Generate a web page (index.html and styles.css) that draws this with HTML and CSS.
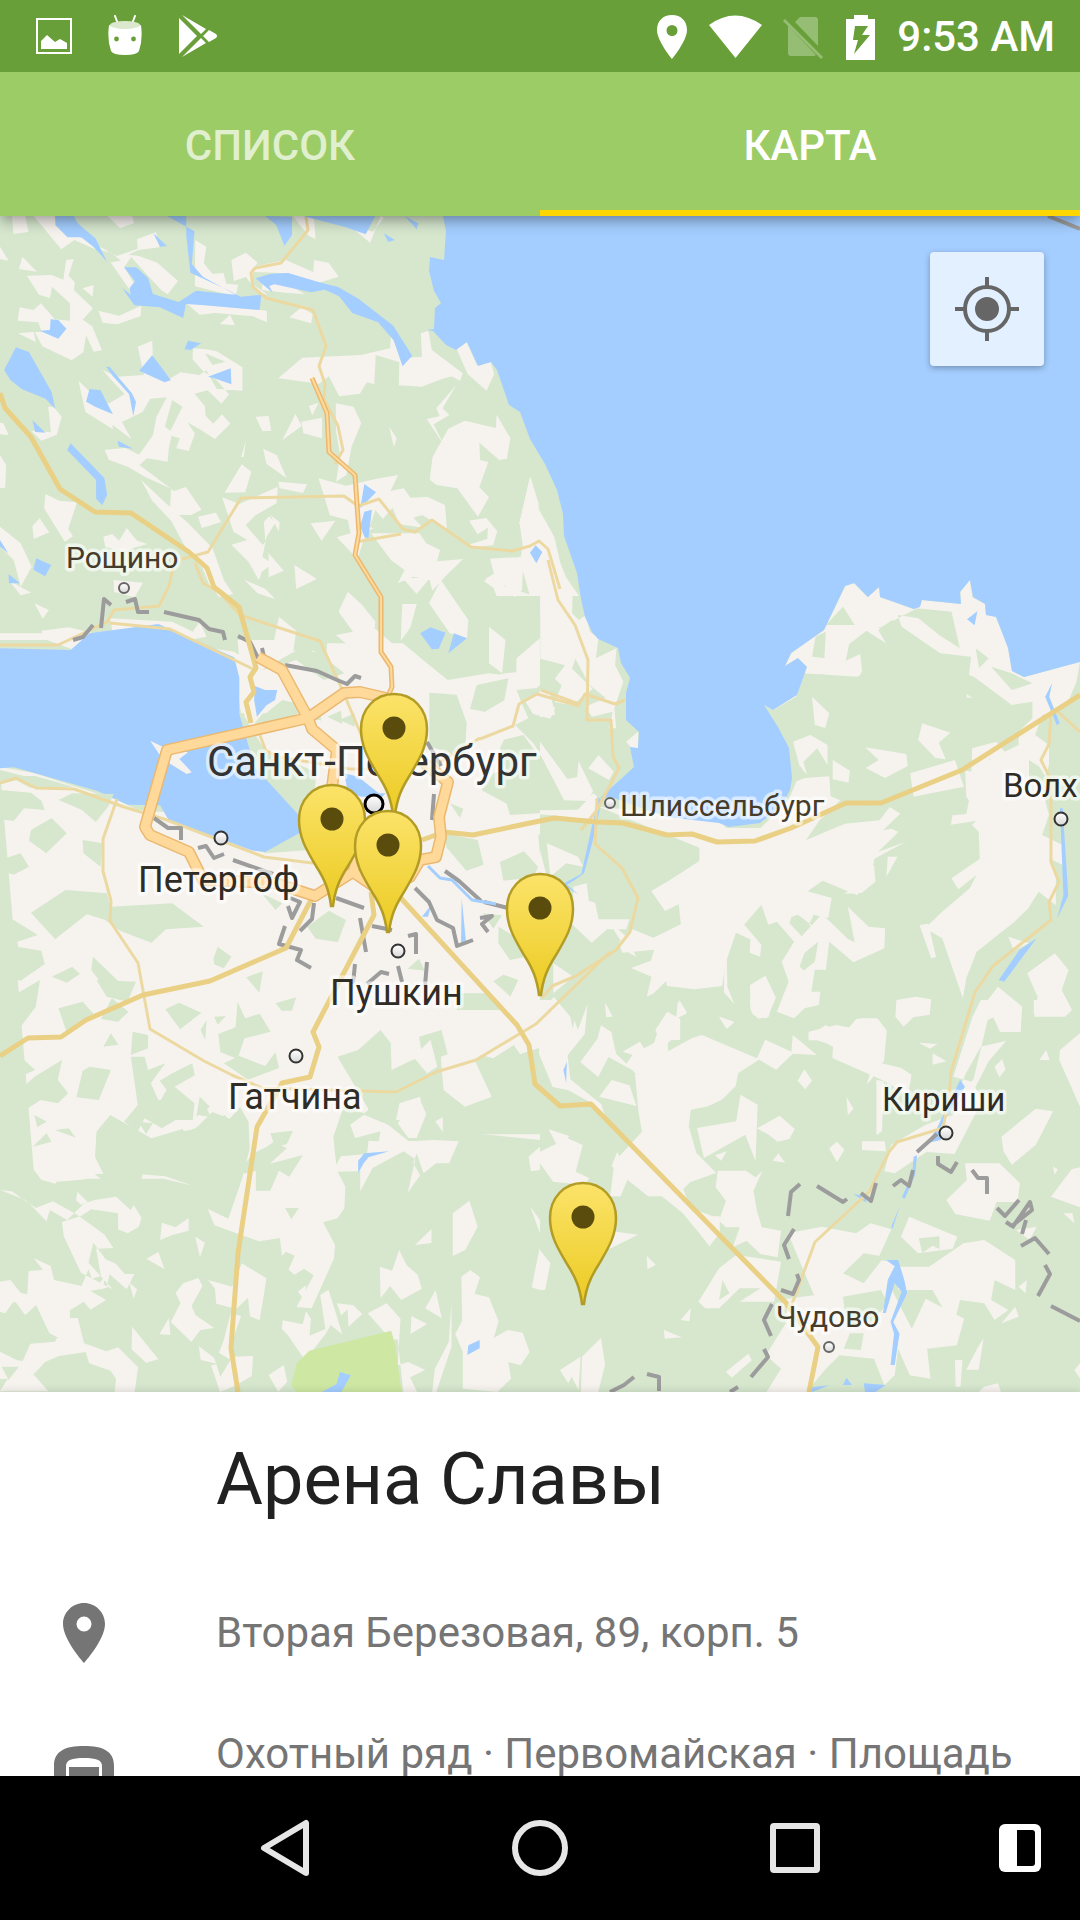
FILE: index.html
```html
<!DOCTYPE html>
<html lang="ru">
<head>
<meta charset="utf-8">
<meta name="viewport" content="width=device-width, initial-scale=1">
<title>Карта</title>
<link rel="stylesheet" href="styles.css">
</head>
<body>
<div class="screen">
  <header class="status">
    <div class="status-group status-group-left">
      <svg width="36" height="42" viewBox="0 0 36 42" aria-hidden="true"><rect x="1" y="4" width="34" height="34" fill="none" stroke="#fff" stroke-width="2"/><path fill="#fff" d="M5 26l6-6 8 7 5-3 7 4v6H5z"/></svg>
      <svg width="34" height="42" viewBox="0 0 34 42" aria-hidden="true"><path stroke="#fff" stroke-width="2" stroke-linecap="round" d="M7 1l3 8M27 1l-3 8"/><path fill="#fff" d="M1 10q16 5 32 0 2 15-2 26-2 4-14 4T3 36Q-1 25 1 10z"/><ellipse cx="17" cy="10" rx="15" ry="4" fill="#dbe8cd"/><circle cx="8.500" cy="24" r="2.400" fill="#689f38"/><circle cx="25.500" cy="24" r="2.400" fill="#689f38"/></svg>
      <svg width="40" height="44" viewBox="0 0 40 44" aria-hidden="true"><path fill="#fff" d="M1 4l18 18L1 40zM4 1l24 14-5 5zM4 43l24-14-5-5zM25 22l6-6 7 4q2 2 0 4l-7 4z"/></svg>
    </div>
    <div class="status-group">
      <svg width="32" height="44" viewBox="0 0 32 44" aria-hidden="true"><path fill="#fff" fill-rule="evenodd" d="M16 0C7 0 1 6 1 15c0 11 15 29 15 29s15-18 15-29C31 6 25 0 16 0zm0 21a5.500 5.500 0 1 1 0-11 5.500 5.500 0 0 1 0 11z"/></svg>
      <svg width="53" height="44" viewBox="0 0 53 44" aria-hidden="true"><path fill="#fff" d="M0 10Q26-9 53 10L26.500 43z"/></svg>
      <svg width="40" height="44" viewBox="0 0 40 44" aria-hidden="true"><path fill="#96bd74" d="M5 11l28 29q-1 1-3 1H8q-3 0-3-3zM12 7l5-5h15q3 0 3 3v26zM0 6l2-2 38 38-2 2z"/></svg>
      <svg width="32" height="46" viewBox="0 0 32 46" aria-hidden="true"><path fill="#fff" fill-rule="evenodd" d="M2 5h8V1h14v4h7v41H2zM11 12L9 26h5l-4 14 16-19h-8l6-9z"/></svg>
      <time class="clock">9:53 AM</time>
    </div>
  </header>

  <nav class="tabs">
    <button class="tab" type="button">СПИСОК</button>
    <button class="tab tab-active" type="button" aria-current="page">КАРТА</button>
  </nav>

  <main class="map">
    <svg class="map-canvas" viewBox="0 0 1080 1176" preserveAspectRatio="xMidYMid slice" role="img" aria-label="Санкт-Петербург и окрестности">
      <defs>
        <linearGradient id="pin-fill" x1="0" y1="0" x2="0" y2="1"><stop offset="0" stop-color="#fbe369"/><stop offset="1" stop-color="#eccb22"/></linearGradient>
        <linearGradient id="dot-fill" x1="0" y1="0" x2="0" y2="1"><stop offset="0" stop-color="#fff"/><stop offset="1" stop-color="#d8d8d8"/></linearGradient>
        <g id="pin"><path fill="url(#pin-fill)" stroke="#b39c25" stroke-width="2.500" d="M0 1C-19 1-33 16-33 36c0 19 9 32 17 46 9 14 13 24 15 40h2c2-16 6-26 15-40 8-14 17-27 17-46C33 16 19 1 0 1z"/><circle cy="35" r="11.500" fill="#594c0c"/></g>
      </defs>
      <rect class="wood" width="1080" height="1176"/>

      <!-- north-west: Roshchino and the isthmus -->
      <g transform="translate(0 -6) scale(.34436 .33333)">
        <path class="land" d="M35 18h38l10 48-44 6zM98 18h60l30 50 60 20 92 50 60-22-2-28 55-22 10 46-62 8-28 14 30 4 54 20 60 55-30 40-18-12-38-42-50-58-20 30 34 60 16 60-90-134 30-5-30-26-45-8-60-28-38 28zM312 18h72l5 22-40 14zM0 110l25 42-25-5zM65 140l42 45-52-8zM192 150l22-3-15 50 18 20-2 24 55 54-30 34 28 20 28 72-24 4-22-50-8 52-34 24-85-42-22-42 20-2-10-28-60-5 6-40 40 8 22-20 40 48 44 4v-52l-52-50-6 34-32-10-35-57 72-2 34 14zM52 370l46-4 6 30zM240 235l32-10-3 35zM286 302l60 15 64-30-2 32-68 24-42-5zM567 90l32 20-7 50 25 32 32-3 8 32 35 3-8 35-118-30zM540 278l45 6 190 18v35l-40-18-110-10-45 5zM638 342l30-28 14 32zM672 150l42-22 34 30-8 12-12 50 50 34-30-8-34-45-35 12zM840 322l36-30 32 20-4 28zM760 240l70 8 55 5-50-30-72-8zM830 150l80 36 2-36 42 8 30 42-58 18-90-28-102-4 10-18zM850 18h130l95 80 30-80 10 5-32 42-80-25-15 5-76-20 4 62-20-10zM400 410l42-18 2 50 40 70 40-25 55 8 20-14 30 55 75 6v-70l-75-48-30-6-38-3-2 32 30 36 40 28 36 42-22 28-40-40-38 10 30 38 2 28 22 24 26-28 24 28-45 46-45-30-35-20 22 34-18 52-36-8 10-30-24-8-8 40-3 38-60-10-22 20 100 78 35-12 45 68-30 16-62-4 4-75-75-35-50-30-56-22-12-30 60-5 40 20 40-58 10-54 30-60-48 4-22 40-60 30 28 52-74-58-26-30-10-42 42 24 48-30-28-30-36-42 42 20 78-5zM228 512l30 30 60 40 10 76-80-52zM140 590h15l24 30-14 54-45 18-30-30 58 5zM0 638l10 2 15 35-25-2zM0 735l18 30-3 68-15 2zM132 852l40 20 52 5-26 80 14 22-24 16-42-70-18-30zM115 925l28 42-45 20-4-38zM300 980l26-8 20 20 22-38 30 38 30 10-70 20-52-10zM410 810l70 68 65 60 72 76 34 98 26 40-40 10-30-40-20-50-40-44-50-96-55-60zM645 862l50 20 112-52-4 50-60 35-30 30 50 60 8-10-5-58 15-18 18 20-25 42-12 60 30 20-32 24-8 26-30-55-50-52 46-14-40-25zM652 848l50-85 28 22-18 62zM700 742l14-50-6 48zM764 716l40 20 28 68-58-42zM808 815l84 8-12 26-68-14zM575 920l52-12 15 28-56 18zM742 620l38-2 8 44-26 2zM858 612l18 36-56 42zM875 635l60-12v62l-54-15zM808 505l70-62 170-8 85-20 2-38 40 70-14 10-70-22-4 88-22-6-20 34-60 8-30-60-28 22zM925 578l-28 10 10 28zM975 580l52 10 22 50-28 70-15 85-30 20 12-80-12-70zM925 805l80 22 85-20 66-12-22 48 38-8 20 28 50-2 50 24 6 75-72-45-26 8 28 30-68-10-20-50-46 56-30 18-26 80-60-65 40-12-8-40-52-14zM902 940l72-8-40 60zM785 915l27 22-2 28zM1160 445l68-5 76 30 38 20-60 18-58 22-66-4zM1222 370l22-8 10 58 90 70-8 22-110-58zM1325 415l30-18 30 68 40-8 10 35-22 50-55-50zM1325 525l-40 70 20 20-46 28 30 62-50-78 38-8-10-24zM1302 656l48-24 90 22 2-40 40 70-10 62-22 4-58-52 2 52 24 6-26 76 28 30-32 58-60-85-60-10-20-16 8-68zM1540 800l24 80 4 190-60-130zM1362 932l50-8 32 40-12 42-62 5-5-8 50-16 2-34-30 20zM1130 650l22 35-8 26zM1078 970l140 0 20 30 40 20-8 30-20 60-50-10-45 20 20-40-40-30zM1255 1055l90-8-50 50-40 45-15-70zM1425 1050l95-10-4 100-20 22-42-50-45-5 40-25zM1280 1110l80 120-4 55-50-15-60-90zM1168 1182h42l-18 70-28 40zM1170 1105l80-3-40 50zM1010 1145l42 40 38 50-10 95-70-25-35-30 50-10-42-60zM1060 1230l90 80-20 130h-120l10-90zM1420 1250l48 40-10 100-38-30zM1500 1345l68-60v155h-70zM710 1110l60 26 30 32-52-18zM855 1065l65 42-60 30zM780 1030l44 52-44 20zM330 1110l85 8-24 44-60-16zM100 1180l42 20-18 26zM120 1262l80-10 80 20-40 28-30 18-80-30zM320 1225l180 10 60 30 20-30 20 45-50 10 60 25 70 10 60 40 50-45 20-100 50 42-8 60 60 0 60 95 70 20v73H700l-15-90-180-80-170-20zM0 950l60 50 32 70-32 60-20-80-40-40zM25 1110l65 38-30 8z"/>
        <path class="wood" d="M595 430l60 25-38 10zM500 570l30 20-35 72-16-12zM790 790l40 14-58 18zM1090 900l32 40-20 25-28-15zM900 1245l30 25-28 22zM1240 1350l60 20 5 40-80-12z"/>
        <path class="water" d="M160 18h55l8 18 14 14 40 35 34 70-40-45-35-28-40 0-35-36zM445 70l40 38-20 2zM485 18h56v60l12 110 108 52 38 20 60-6-5 46-160-14-54-4-8 42-68-32-74-6-35-52 25 20-4-20 16-20-32-42h36l34 32 14 48 75 24 50-34 115 12-95-54-32-38 8-98zM742 205l45-14 50-2 90 28 55 14 60 36 100 80 55 90-28 32-26-78-45-54-75-28-38-50-42-20-40 8-106-24-15 5 10 20zM770 18l78 2v55l-22 32-24-62zM880 18h210l-28 55-60-22zM1175 18l40 22-5 18zM1115 70l32 20-20 6zM12 480l34-68 38 14 66 120 10 50-28-30-68-28-34-28zM115 362l30-2 2-32 22 2 24 26-24 30zM250 575l10-38 32 4 36 72-50-22zM404 482l38-46 30 40 24 35-18 6zM536 418l10-26 38 8-30 20zM604 500l66-25 2 48-50-18zM308 470h10l65 80 12 26-8 42-12-65-48-56zM94 630l38 38-30-2zM342 692l45 24-42-6zM205 700l98 104 8 50-14 32-18-20 0-56-84-90zM1058 822l34 25-46 48zM1058 905l22-6-10 86-12-5-12-32zM1540 1014l22-4 6 38-12 12zM105 1045l44 20-18 34-34-20zM25 1092l33 28h-32zM0 990l24 40-24-20zM1220 1270l30-18 44 16-20 48-20 2zM1318 1270l38 15-54 45z"/>
      </g>

      <!-- south-west: open farmland around Gatchina -->
      <g transform="translate(0 424) scale(.34436 .33333)">
        <path class="land" d="M0 390V380l100 20 240 80 60 30 120 10 250 120 130-10 50-620h220l70 60 60 50 120-20 148 20v1380l-190-20-140-90-110-30-70 60-60-20-30 90 10 100 25 50-3 65-20 30-42 12 35 68-3 40-65 150-44-4 50-95-28-20-28 18-34-30-8-80-60 10-130-48-20-50 60 30 40-120 22-90-3-80-25-45-30 35-50-20-50 50-45 10 38 50-5 110-80-20-140 0-80 0-60 10 60 60-20 8-65-60-50-15-22-30zM0 0h205l12-20H0z"/>
        <path class="water" d="M0 25l205 5 55-50 200-28 220 100 15 60v110l45 160 160 180-130 74-40-5-240-90-25-45-94-2-90-42-240-70-40 3-41-20z"/>
        <path class="land" d="M436 302l50 25 60 10-25 20 36 40-15 5-70-45zM690 0h120l100 240-130-40-50 60-20-30zM720 250l210-10 40 180-200-90z"/>
        <path class="water" d="M740 138l30 12 35 0-6 30-25 16-28 34-8-50zM1000 400l40 10 60 50 20 0-10 10-60 0-40-10z"/>
        <path class="wood" d="M0 390l70 18h32l110 32-75 6-50-3-40-22-47 12zM0 450l90 8 30 24 10 28-60-5-30 38-40-5zM170 480l40-20 120 2-16 38-36 46-40-36zM90 570l60-36 44 46-60 60-50-38zM0 660l60-20 24 40-44 24-30-10zM190 750l120 10 12 40 178-10 92 70-110 8-42 40-90-35-46-34-52-16-92 75-70-80zM0 850l40-10 70 45-60 20 10 50-60-10zM240 600l58 10-6 70-50-40zM892 860l63-48 50 28-24 66-64-10zM620 955l12-35 40 30-22 35-28-12zM715 1012l48-18-10 64zM690 1085l22 50 42-14 32 54-76 20-20 62-50-20-6-55 50-20zM0 930l60-8 60 10 10 40-70 50-55-15zM270 950l80 80-45 15-40-55zM150 1010l60-30 22 22-38 26zM50 1060l66-40-12 80-58 80zM170 1105l70-20 35 40-50 40-32 10zM325 1075l48 40-30 30-50-8zM480 1108l40-20 65 30-62 50zM385 1175l45 10 0 40-50 20zM300 1220l22-40 22 34zM600 1140l-4 60-14-30zM622 1130l34-2-24 26zM650 1270l45-22 75 30 30-42 10 48-90 35zM760 760l60 30-20 20zM800 1090l60-18-12 40-30 0zM0 1290l60-40 42 40-48 22zM260 1280l62 10-35 90-65-8 18-80zM380 1250h40l10 40 50-20-42 60 22 50 70-5 20 40-80 50-50-30-20 40-40-30 40-50zM100 1310l80-50-12 60 30 40-30 30-50-10-60 40-10-60zM500 1300l58-30 8 36-80 46-22-30zM0 1365l50-10 30 30-60 40zM450 1410l45-80 70 60-5 50h-110zM570 1430l10-60 30 30zM980 1250l60-20 65-60 30 40 2 80 60-30 30-10-10-60 65-20 30 120 60-15 25-30 35 10 60-40 40 60-50 30 20-60 66-22v260h-480l-20-80zM760 90l120-70 60 30 60 50-60 20-80-60-60 20zM950 230l40-18 4 40zM985 240l45-20 0 40zM820 180l40 10 10 30-80 20-30-10z"/>
        <path class="land" d="M1280 1250l80-30 68 150-78 30-62-50zM1160 1390l60-20 10 70h-80zM1200 1250l50-50 20 80-30 20z"/>
      </g>

      <!-- south: woods below Gatchina -->
      <g transform="translate(0 764) scale(.34436 .33333)">
        <path class="wood" d="M280 455l40-50 120 70 90-28 36 60-6 110-80-28-90-8-90 0-24-50zM555 450l98-45 38 55-4 80-20 10-10 80-30 60-60-25-14-60zM690 580l45-60 40-20 20-15 38 20-50 46 97-26-40 65-30-18-25 60h-42v-60l-20 8zM785 460l66-8-18 40-34 10zM100 405l36 20-28 16zM160 450l40-5 20 28zM95 500l40-40 15 25zM0 560l65 10-65 32zM165 605l65-5-12 80-48-45-25-3zM118 625l70 20-35 45-37 0zM275 582l140-2-15 56 30 14-50 5-60-35zM402 425l42 5-20 32zM575 405l18-35 20 42zM828 684h40l-22 34zM280 0l115 5-25 60-60-15z"/>
        <path class="land" d="M0 630l75 30 60 64 10-34 50 30 50-50 30-10 62-10 42 40 10-14 22 38-8 26-32 20-28-12 0-48-78-12-30 20-55 18 5 42 50 110 92 50-70-80 14-60 36 50 30 14 25 30h28l-22 46-50-45-8 40-48 10 46 26-45 30-20-24-40 26v100l-60-32-38-84-32 30-54-76 60 14 4-70 42-4-28-35 50 24 10 42 80 18 20-50 10 28 26-8-14-82 50-2-25-40-80-60-70-40-50 20-70-50zM0 905l30-5 45 58-38 10-22 32-15-4zM465 780l5-52 40 14 38-28v38l-50 14zM425 836l35-20 18 52zM567 770l28 18-14 44zM305 888l-6 40-22-2zM376 908l22 20-10 28zM510 938l22-28 44-16 12 24-32 60 12 28 54 38-40 6-26 36-60-60 28-56zM604 900l70 20 28-70 72 45-20 126-28-12-6-56-34 34-58-16-4-46zM490 1015l5 50-32-2zM192 1014h34l18 76 65 24 34-12 58 60-10 74h-58l4-40-16-24-62-22-10-34-78 12-40 18-40 44-90 8-5-30-20-65 74 38 16 2 22-52 72-6zM384 1040l76 98-36 10-42-40zM865 935l24-20-5 46zM930 945l24-16 40 134-34-28-14 26-60 80-50-75-18-20 3-25 58 12 10-40 14 24-4 50 46-20zM978 970l48 6 26 26-40 38-3-52-18 18zM1068 1000l55-30 40 46-8 140 30-10 50 24-44 22 20 44-40 0-16-158-80 10 44-28zM1103 860l36 12 20-62 22 46 32 28 12 42-60 34-32-42-28 36zM1235 985l30-54 18 84zM1195 1008l45 24-48 30zM1311 970v130l-44 136h-12l8-70 40-80zM1315 700l48-38 24 78-36 70-36 18zM1205 795l48-48v42zM1340 890l26-20 28 22-16 50 42 10 28 72-14 50 40-24 44 8 20 58-26 40-36-10 8 50-40 40-100-10v-110l-22-54 20-40zM1155 430l35-50 34-10 14 32-28 72-24 0zM1264 424l22-12v44zM965 575l25-46 76-7 4-40 30 2 5-30-74 20-14-40 40-30 70 30 60 50 70-4 75 4-28 66-38 0-36 30-20-60-10 30 20 36-36 52 22-100-34-24-90 50-36 70v-60zM640 1190l35-60 60-2-4 60-50 30-42 18-26-80 20-4-50-12-6-42 45 36zM780 1185l44-30 10 50-26 30zM650 1080l20-80 30 8-24 70-10 60-30-20zM20 1200l50-50 70 84H0zM1535 530l33-30v70l-26 4zM1540 680l28 40v40zM1568 800v130l-24-8z"/>
        <path class="wood" d="M790 860l40-45 26 12-20 46zM5 1160l50 0-30 40z"/>
        <path class="park" d="M862 1150l36-38 238-60 12 42 18 142H860l-15-20z"/>
        <path class="water" d="M935 1236l42-24 10-36 32 10-28 50zM1040 580v-38l18-22 72-6-60 18-14 18zM1360 1096l33-16v25l-36 20z"/>
      </g>

      <!-- north-east shore of the isthmus -->
      <g transform="translate(420 0) scale(.33333)">
        <path class="land" d="M330 782l25 95 48 86 24 104 50 73H330l-30-105 8-46-9-68zM210 1028l72-4-30 86 90 30H230l-10-25-28-20 30-20z"/>
        <path class="water" d="M330 1010l17-22 20 20-18 34z"/>
      </g>

      <!-- east of the city -->
      <g transform="translate(360 464) scale(.33333)">
        <path class="land" d="M205 40l230-60 105-10v1040H205z"/>
        <path class="wood" d="M208 38l82 6 30 84-6 110-106-40zM350 15l95-20-12 66-58 34-45-8zM470 30l60-6 40-34 150-30v350l-62-60-8 60-40 20-90-140-55-55 40-20-22-50zM420 205l12-26 58-14 34 46 86 100 10 46 72 16-44 20-198 12-10-34-75-40 36-52 36-8zM255 460l98 20 18 74-52 18-60-70zM270 370l40 16-10 28zM535 465l55-32 52 32-42 36-8 30 90 60 38 100v300H540l60-50-40-40 30-40 50-140-30-90-60 0-6-50zM420 546l72-32 42 46-12 32-92 10zM416 740l64 40 10 52-40 8-35-50zM368 700l58 6-26 40zM400 904l30-20 45 16-24 50zM143 866l34-30 18 36zM300 940h80l52 50H290z"/>
        <path class="land" d="M496 64l46-30 43 50-14 32-52-14zM580 850l60 40-60 50zM640 620l40-10 10 80-50-10z"/>
        <path class="water" d="M305 655l14 140-16-4zM186 710l28-36-10 36z"/>
      </g>

      <!-- south shore of the lake, Volkhov -->
      <g transform="translate(540 344) scale(.34436 .33333)">
        <path class="land" d="M0 0h55l40 100-2 60 20 20 20-15 12 50 25 20-8 60 60-30-4 50 24 50-26 80 5 60-20 0 10-50-60 15-20-30 60-26-48-40-40-78-10 30 60 60-60 50-50-10 20-50-20-20 30-40-72-20zM0 390l30 12 14 62-44 8zM0 545l80 112 28-6 4-48 42 90-14 30-70-2-70-140zM140 625l30-40 44 50-14 25zM250 545l35-30v52l-20-4zM155 700l20 18-20 60-155-15v-12l110-2zM170 740l200 20 20-26 110 10 40 60 100 0 80-80 25-60 25-10 70-5 4 60 28 12-60 60-40 60 44-20 70-30 100-10 30-40 30 20-50 50 25-5 20 10-60 60 80-30-90 50-10 50-40 60-100-44-44 32 70 20-10 60-42-10-14 30 32 20-64-50-86 30-20-60-50 60 50 60-4 36-30-12 2-40-42-20-30 90-10 70-80 10-80-10-20-110-110 10-10-30 40-40 60 25 80-40-6-60-40 20-40-60 50-30 90-60 0-40zM20 850l90 40 16 30-50-10-46 40zM0 870l20 80-20 0zM100 1010l60 18 10 50 90 0-10 30-55 0-45 40-60-58z"/>
        <path class="land" d="M650 435l28 15 66-40 30-90-25-26-37 24 18-38 95-70 62-132 26-8 38 42 34-30 3 30 98 36 22-28 114 12-1-37 27-35 8 52 37 20 2 33 30 5 35 95 10 68 35 19 163-47-10 60-20 50-40 40-40 10-20 60 40 30 0 60-20 70 20 80-20 60 60 30v60l-40-20 20 60v80l-50-40-30 50-40 40-110 90-30 80-10 60-60-180-50-30 50-50 80-70 30-60-4-110-20-20 26-25-42-60-4-100 26-40-80-40-6-90 60 10 10-90 8-70-90-10-140-100-40 30 40 70-100 70-160-10-60 30-110 100-20 20-32-30 28 92-54-10-6 70-80-20-50-32 60-70-60-20-10 150-16-100z"/>
        <path class="wood" d="M690 470l60-60 22-60 46-8 26 10 6 50 70-30 15-40-5-50-42 20 10-50 50-40 60 40 60-10 15 70-20 40-60 130-100 70-20 22-34-60 10 90-40 20-30-75-45 10-40-10-16-60zM830 195l50-55 34 55zM790 290l10-60 30-15-4 80zM985 205l110-60 100 10 24 110-60-40-60-50-60-10 20 65-80-30zM1100 255l100 75 60 20 110 85 60-10 0 50-40 40 0 40-60 30-80 50-80-20-30 30-40 50-130 30-20-50-4 90-60-10-10-70-10-100-60-50 50-30 30-80 140-30 130-50-10 50 110 20-80-60zM1265 265l38 30-28 30zM1310 320l60 70 60-20-60-30zM1420 600l30 20 30 50-60-10z"/>
        <path class="land" d="M790 410l50 50-12 44-30-10zM1110 490l82 28-34 30 20 50-30-4-50-54zM944 562l120 20 4 36-66 36-56-30 38-24zM850 600l50 32-4 36-46-10zM735 545l50-20 50 30 0 60-30-50-40 40 10 40-22-30zM1075 640l130-40 26 80-146 30zM1255 565l70-20 40 50-40 20-20-20-2 60-50-20zM1250 700l62-8-4 84-115 18 5-28 40-4zM1195 955l120-85 10 28-110 90zM1010 890l28 0-32 60zM970 915l4 50-40 34-50 2 56-38-10-20zM894 1040l60 60 48 5-2 60-90 42-70-62-10 84-32 0-10 66-20 10-6-70 36-30 10-60-40 34-14 40 22 26-2 50 40 0-4 40-42 10-30 30-50-20 34-90-20-60 36-60-50-60 10-36 46-20-20 60 36 40 58-66 26 24 50 50 20 10zM1102 1095l26-4 22 100-14 4zM1203 1160l40 18-32 24zM1360 1130l60 20-44 22zM482 1150l60 30 2 100 20 52-30-35 2-100zM610 1275l45-28 30 66-26 62-40-10-8-20zM340 1140l30 0 20 60 60-30-20 40 10 30-50 0-60 60-20 10 14-60-60-26 58-22zM1035 1320l55-10 46 8-4 46-48 8-28 28-24-30zM780 1415l80-20 50 10 20-30 50 0 26 36-6 30H780zM405 1320l22 38-30 12zM520 1370l44 16-20 20zM335 1410l34-54 38 20v64h-60zM0 1360l40-50 48 60 14 70H20zM190 1330l20 40-18 0zM200 1080l50 50 30 60-20-10-40-60zM1415 1240l80-60 40 50-20 60 30 60-20 20-90 0 10-60zM1330 1280l70 60-4 76-60 0-40-90z"/>
        <path class="water" d="M1240 178l30-24-8 42zM1467 410l20-40-8 40 30 80-8 6zM1510 745l8 0 16 262-32 68 18-70zM1332 1260l60-90 50-35-94 130zM168 710l10 10-14 80-36 140-30 22-20 12 35 30-45-28 8-10 44-24 28-130z"/>
      </g>

      <!-- south-east: Kirishi, Chudovo -->
      <g transform="translate(540 784) scale(.34436 .33333)">
        <path class="land" d="M0 0h45l35 60 10 60 10-60 10 30 28-78-8 90-50 64 8 72 90 75 15 48-40-50-70-40-46-10-40-100zM190 10l20 38-18 4zM345 85l30-50 30 46 0 20-34 28 4 70-20 30-20 50-50 0-2-50-14-18-70-40-30 60-52-45 50-70 10-40 30 20 14 65 30 30 20-30 60-32zM400 5l25 36-30 15zM610 0h68l-14 50-30 6-20-20zM520 50l44 16-24 18zM480 150l30-30-2 44zM777 110l52-34 54 24 36-44h50l38 36-8 90-40 60-10 10 20-68 80 20 30 20-10 60-80-46-140-64 2-34-20-10zM630 175l24-56 76 36 4-50 70 60-70-4-48 48-50-30-60 40-8 40-40 40-40 20-50 10-6 50 22 80 58 60-40 14-36 14-20 20 20 56 66 26 20 0 0 50-30 40-30-40-48-60-60-50-40 0-60-50-20 50-30 0 12-104 80-90-10-60-10-110 30-30-6-20-60-20 50-30 30 50 50-20 70-40 30-10zM172 290l36-50 52 16 20 62zM748 242l20-34 22 34-20 26zM630 385l66-38 44 40-16 30-34 8-28-22zM582 284l50 30-6 170-30-80-120 70-20-90 114-20zM890 290l20 36-16 20zM840 445l22-20 22 24-22 38zM676 482l16-22 20 28zM508 466l34-12-16 28zM25 388l60 20-30 40zM0 455l80-40 44 20-20 80 40 20-16 20-90-10-38-55zM208 498l16-42 16 32-6 40zM292 440l60-22 40 50-10 40-60-50zM516 512l82 0 28 20 20-20-26 60 10 60 14 50 56 10-10 80-50-10-40-40-40 20 20-60-40 0-20-20 20-60-30-40zM935 424h66l4 30-70-4zM977 240l22 4-6 150-16 12zM185 690l100 14-90 46-10-30zM310 768l26 26-24 14zM460 905l60-100 50-40 130 20-20 120-100 0 60-40-60 0-60 60-40 0zM408 960l30-36-4 40zM360 990l52 22-50 4zM122 1070l55-56 12 80-20 82h-50zM58 1110l60-40-6 100-20-40-10 20zM540 1115l65-54 10 20-58 52zM0 750l30 40-15 80H0zM720 700l98-20 100 20 42-30 60 18-40 92 60 6-20 80 60 120 40-90 112 60-22 80-86 10 10 90-60-10-34-80-10 80-30 30-30-80-100-10-40 40-80 100H640l60-100-44-40 60-100 0-70 80-10zM1072 650l140 60-14 36-100 14-50-50zM1180 600l60-60-6-50 100 0 60 60-8 56-60 0-20 56-100-20zM1340 410l100-84 50 8-50 100-70 60-24-40zM1300 60l40-20 0-40h-60l-24 50-56 180 70 20-80 80-30 100-130 90-30-6 20-80 100-60 80-30 60-110zM1280 140l74-18-50 60-40 80 20 40-40 80-40 80-80-6 60-60-20-30 40-60 30-80zM1100 128l54 4-22 14zM1140 160l40 24-40 10zM1434 0h94l-14 44-40 4-40-5zM1450 180l20-30 10 30zM1510 150l58-50v220l-60-140zM1320 200l22-22 10 30-18 24zM1484 590l60-82 24-6v120zM1490 500l14 8-10 16zM1520 640l26 0 6 30zM1040 800l90 0 100-70 60-10 90 60 0 90-60-30-10 60 50 30-40 30-30-50-70-10-20 80-60-110-100 0zM1382 690l60-10-20 40zM1390 860l24-20-4 40zM1380 920l-40 50 50-20zM1205 1080l22 0-6 80-14 0zM1270 1045l18-30-14 94-36 0zM1290 1160l40-10 10 30h-70zM1552 1110l16-20v46z"/>
        <path class="wood" d="M530 840l20 40-30 20zM880 890l110-20 20 40-50 60-70 10zM900 1000l40 0-8 50-50-4zM1100 715l60-6 0 38-20-10-30 22zM880 820l60-60 60 10-60 80z"/>
        <path class="water" d="M68 210l10-25-2 65zM1005 780l35 0 18 60 8 40-40 86 18 35-14 94h-12l10-94-10-36 32-90-20-26-26 90-8 0 14-100 20-40zM910 582l34 6 4 20zM880 1155l10-22 16 22zM790 1162l50-6-50 20zM940 1150l64 5-30 21h-30zM1150 390l70-150 14 20-70 120 0 40-42 10zM1085 470l10-4-6 60-30 70-8-4 30-70zM1020 680l24-60-20 66z"/>
      </g>

      <!-- Lake Ladoga -->
      <path class="water" d="M443 0l3 15-2 29-14-3-1 14 5 20 7 12-6 5-1 21-7 1 6 1 13 14 10 5 11-8 11 24 13-4 6 8 12 35 11 7 10 27 15 25 12 26 6 24 1 22 13 37 4 26 4 18 7 15 6 7 20 9 3 15 9 15-4 15v27l13 12-1 16-8-1 4 20-23 21-11 10 11-1 56 20 52 6 10 4 31-4 21-16 9-17 2-12-3-30-11-21-14-22 9 5 24-15 10-28-9-9-13 8 6-13 33-23 21-44 9-3 14 14 11-10 1 10 34 12 6-2 2-7 39 4-1-12 10-12 3 17 12 7 1 11 10 2 12 31 4 23 12 6 56-15V0z"/>

      <!-- local roads -->
      <g class="road-minor">
        <path d="M306 1l2 13-27 33-26 5-4 5 2 14 13 11 47 12 13 36-7 20 6 18-1 15 14 27 5 24-8 14"/>
        <path d="M182 343l26-7 33-54 103-2 14 10 21-7 24 30 12 3 17-12 39 27 41 4 18-5 9-5 9 8 12 40M356 326l45-8"/>
        <path d="M0 429h58l49-23 7-12 45-4 10-20 4-18M110 407l60 6 83 40M195 347l8 20 17 10 20 22 80 26 22 48 25 60"/>
        <path d="M0 567l16-5 20 10 38 1 50 18 40 12 100 38 48 6 40-5M117 583l-14 40v32l8 30-1 20 28 42 12 66 54 32 28 14 30 13 134 4 40-20 40-12 60-36 74-72"/>
        <path d="M548 344l10 40 17 25 13 35-1 60h24l2 36 6 12-22 42-16 20M541 474l38 14 6-10 30 10 10-4"/>
        <path d="M480 523l33-13 6-22 18-10 42 12M597 582l-2 46 27 24 16 30-8 34-14 18-40 26-24 10-10 12"/>
        <path d="M1051 496l-2 32-8 16 10 20v82l8 20-10 20 2 18-58 46-18 26-24 80-2 26-6 30-46 14-8 10-20 40-54 50-26 70M1056 494l24 22"/>
        <path d="M256 509l10 26 14 6 70 12 20 0M480 522l-50 30"/>
      </g>
      <!-- railways -->
      <path class="rail" d="M73 424l10-3 10-12M101 412l3-29 7 6M126 386l9-3 3 13h11M164 396l35 8 10 9 14 3 2 8M238 420l12 6 8 16M262 432l4 18M285 449l32 6 20 9 10 4 8-8 6 2M154 602l14 10h13v12M198 632l8-2 8 12 10-4M233 644l40 14M427 526l14 24M434 578l-2 26M290 682l10 4-8 16-4-12M314 687l-2 16-12 12M285 710l-6 18 22 6-4 10 14 8M336 682l28 10M372 710l20 4M360 702l6 34M445 655l14 10 22 20M415 672l14 14 8 18 16 8 4 18 16-6M484 686l24 6M480 702l12-2-10 8 6 8M408 720l8-2v20M355 748l-2 20M367 768l14-12 8 2M398 750l4 16M427 746l-2 24M1048 0L1080 13M788 1000l3-24 9-8M817 970l26 16 4-3M861 977l10 8 5-18M893 970l8-6 8 6 4-16M917 936l20-18M938 940v8l13 8 6-10M972 954l6 8h9v16M997 992l8 8 14-16M1006 1006l6 4 20-16-2-8-18 26M1022 1018l4-14M1021 1030l14-8 14 16M1045 1049l5 9-12 22M1051 1090l29 15M794 1013l-10 16 5 14M797 1058l2 6-6 14-12-4M772 1088l-8 16 7 16M764 1133l4 8-17 20M738 1171l-8 5M634 1161l-10 8-14 7M647 1158l12 3v14"/>
      <path class="water-line" d="M428 650l12 12 12 2 20 20 24 4"/>
      <!-- trunk roads -->
      <g class="road-major">
        <path d="M0 177L5 192 31 221 60 273 95 296 131 297 189 336 207 352 214 371 239 391 256 452 250 461 254 476 246 486 251 507"/>
        <path d="M0 840L28 822 61 821 86 804 143 779 210 765 286 732 312 682"/>
        <path d="M371 676L374 699 313 816 319 831 310 861 282 867 257 911 238 1037 231 1132 238 1176"/>
        <path d="M398 679L517 809 529 829 535 868 560 890 591 888 786 1087 818 1131 809 1176"/>
        <path d="M422 624L444 616 473 619 554 602 597 606 623 607 667 619 692 618 717 626 755 625 791 612 846 587 881 587 962 554 1080 479"/>
      </g>
      <!-- motorways -->
      <g class="motorway-case"><path id="spur" class="motorway-thin" d="M312 162L327 197 329 236 355 259 359 317 355 339 381 381 381 436 391 451 392 471 388 480"/><path id="ring" d="M258 441L282 454 308 502 167 534 145 611 150 619 189 636 203 664 275 667 315 680 353 656 375 671 410 661 420 644 436 641 441 621 439 601 448 566 424 547M308 502L344 477 360 476 386 482M308 502L312 513 337 534 332 571M353 656L358 640"/></g>
      <g class="motorway"><path class="motorway-thin-fill" d="M312 162L327 197 329 236 355 259 359 317 355 339 381 381 381 436 391 451 392 471 388 480"/><use href="#ring"/></g>

      <g class="town-dots" fill="url(#dot-fill)">
        <g class="dot-small"><circle cx="124" cy="372" r="5"/><circle cx="610" cy="587" r="5"/><circle cx="829" cy="1131" r="5"/></g>
        <circle cx="221" cy="622" r="6.500"/><circle cx="398" cy="735" r="6.500"/><circle cx="296" cy="840" r="6.500"/><circle cx="1061" cy="603" r="6.500"/><circle cx="946" cy="917" r="6.500"/>
        <circle class="dot-capital" cx="374" cy="588" r="9"/>
      </g>
      <g class="labels">
        <text class="label-small" x="66" y="352">Рощино</text>
        <text class="label-small" x="620" y="600">Шлиссельбург</text>
        <text class="label-small" x="776" y="1111">Чудово</text>
        <text class="label-medium" x="1003" y="581">Волх</text>
        <text class="label-medium" x="882" y="895">Кириши</text>
        <text class="label-town" x="138" y="676">Петергоф</text>
        <text class="label-town" x="330" y="789">Пушкин</text>
        <text class="label-town" x="228" y="893">Гатчина</text>
        <text class="label-city" x="207" y="560">Санкт-Петербург</text>
      </g>
      <use href="#pin" x="394" y="477"/>
      <use href="#pin" x="332" y="568"/>
      <use href="#pin" x="388" y="594"/>
      <use href="#pin" x="540" y="657"/>
      <use href="#pin" x="583" y="966"/>
    </svg>
    <button class="locate" type="button" aria-label="Моё местоположение">
      <svg width="66" height="66" viewBox="0 0 66 66" aria-hidden="true"><circle cx="33" cy="33" r="22" fill="none" stroke="#666" stroke-width="4"/><circle cx="33" cy="33" r="12" fill="#666"/><path stroke="#666" stroke-width="4" d="M33 1v9M33 56v9M1 33h9M56 33h9"/></svg>
    </button>
  </main>

  <section class="sheet">
    <h1 class="sheet-title">Арена Славы</h1>
    <div class="row">
      <svg width="72" height="72" viewBox="0 0 24 24" aria-hidden="true"><path fill="#757575" d="M12 2C8.130 2 5 5.130 5 9c0 5.250 7 13 7 13s7-7.750 7-13c0-3.870-3.130-7-7-7zm0 9.500a2.500 2.500 0 1 1 0-5 2.500 2.500 0 0 1 0 5z"/></svg>
      <p class="row-text">Вторая Березовая, 89, корп. 5</p>
    </div>
    <div class="row row-tall">
      <svg width="72" height="72" viewBox="0 0 72 72" aria-hidden="true"><path fill="#757575" fill-rule="evenodd" d="M36 4C17 4 6 9 6 24v34l6 8h48l6-8V24C66 9 55 4 36 4zm0 12c12 0 18 2 18 8v30H18V24c0-6 6-8 18-8z"/><path fill="#757575" d="M21 25h30v14H21z"/></svg>
      <p class="row-text">Охотный ряд · Первомайская · Площадь</p>
    </div>
  </section>

  <footer class="navbar">
    <button class="nav-button nav-back" type="button" aria-label="Назад"><svg width="50" height="58" viewBox="0 0 50 58" aria-hidden="true"><path fill="none" stroke="#e6e6e6" stroke-width="6" stroke-linejoin="round" d="M46 4v50L4 29z"/></svg></button>
    <button class="nav-button" type="button" aria-label="Домой"><svg width="58" height="58" viewBox="0 0 58 58" aria-hidden="true"><circle cx="29" cy="29" r="25" fill="none" stroke="#e6e6e6" stroke-width="6"/></svg></button>
    <button class="nav-button" type="button" aria-label="Недавние"><svg width="50" height="50" viewBox="0 0 50 50" aria-hidden="true"><rect x="3" y="3" width="44" height="44" rx="1" fill="none" stroke="#e6e6e6" stroke-width="6" stroke-linejoin="round"/></svg></button>
    <button class="nav-button nav-split" type="button" aria-label="Разделить экран"><svg width="42" height="48" viewBox="0 0 42 48" aria-hidden="true"><rect width="42" height="48" rx="6" fill="#fff"/><path d="M18 6h15q3 0 3 3v30q0 3-3 3H18z"/></svg></button>
  </footer>
</div>
</body>
</html>
```
FILE: styles.css
```css
* {
  box-sizing: border-box;
}

body {
  margin: 0;
  font-family: Roboto, "Noto Sans", sans-serif;
}

button {
  border: 0;
  padding: 0;
  margin: 0;
  background: none;
  font: inherit;
  color: inherit;
}

svg {
  display: block;
  flex: none;
}

.screen {
  display: flex;
  flex-direction: column;
  height: 100vh;
  background: #fff;
}

/* status bar */
.status {
  position: relative;
  z-index: 2;
  flex: none;
  display: flex;
  justify-content: space-between;
  height: 72px;
  padding: 0 25px 0 36px;
  background: #689f38;
  color: #fff;
}

.status-group {
  display: flex;
  align-items: center;
  gap: 21px;
  padding-top: 2px;
}

.status-group-left {
  gap: 36px;
  padding-top: 0;
}

.clock {
  font-size: 42px;
  font-weight: 500;
  line-height: 50px;
}

/* tabs */
.tabs {
  position: relative;
  z-index: 1;
  flex: none;
  display: grid;
  grid-template-columns: 1fr 1fr;
  height: 144px;
  background: #9ccc65;
  box-shadow: 0 4px 14px rgba(0, 0, 0, 0.4);
}

.tab {
  border-top: 8px solid transparent;
  border-bottom: 6px solid transparent;
  font-size: 42px;
  font-weight: 500;
  color: rgba(255, 255, 255, 0.7);
}

.tab-active {
  border-bottom-color: #ffd600;
  color: #fff;
}

/* map */
.map {
  position: relative;
  flex: 1;
  min-height: 0;
  overflow: hidden;
}

.map-canvas {
  width: 100%;
  height: 100%;
}

.wood { fill: #d6e7ce; }
.land { fill: #f6f3ee; }
.park { fill: #cee8a4; }
.water { fill: #a4ceff; }

.road-minor,
.road-major,
.motorway-case,
.motorway,
.rail,
.water-line {
  fill: none;
  stroke-linejoin: round;
}

.road-minor {
  stroke: #ecd9a2;
  stroke-width: 3;
}

.road-major {
  stroke: #e9d084;
  stroke-width: 5;
}

.rail {
  stroke: #9c9c9c;
  stroke-width: 4;
}

.water-line {
  stroke: #a4ceff;
  stroke-width: 3;
}

.motorway-case {
  stroke: #ebb870;
  stroke-width: 12;
}

.motorway {
  stroke: #ffd99a;
  stroke-width: 9;
}

.motorway-thin { stroke-width: 5; }
.motorway-thin-fill { stroke-width: 2; }

.town-dots {
  stroke: #333;
  stroke-width: 2;
}

.dot-small {
  stroke: #666;
}

.dot-capital {
  stroke: #000;
  stroke-width: 3;
}

.labels {
  fill: #2f2c26;
  stroke: rgba(255, 255, 255, 0.6);
  stroke-width: 7;
  stroke-linejoin: round;
  paint-order: stroke;
}

.label-small {
  font-size: 30px;
  fill: #453c2b;
}

.label-medium { font-size: 33px; }
.label-town { font-size: 36px; }

.label-city {
  font-size: 42px;
  fill: #333;
}

.locate {
  position: absolute;
  top: 36px;
  right: 36px;
  display: grid;
  place-items: center;
  width: 114px;
  height: 114px;
  border-radius: 4px;
  background: #e3f0ff;
  box-shadow: 0 2px 6px rgba(0, 0, 0, 0.3);
}

/* details sheet */
.sheet {
  position: relative;
  flex: none;
  height: 384px;
  padding: 46px 48px 0;
  overflow: hidden;
  background: #fff;
  box-shadow: 0 -1px 8px rgba(0, 0, 0, 0.12);
  color: #757575;
}

.sheet-title {
  margin: 0 0 75px 168px;
  font-size: 72px;
  font-weight: 400;
  line-height: 84px;
  color: #212121;
}

.row {
  display: grid;
  grid-template-columns: 72px 1fr;
  column-gap: 96px;
  align-items: center;
  margin-bottom: 60px;
}

.row-tall {
  min-height: 98px;
}

.row-tall .row-text {
  align-self: start;
}

.row-text {
  margin: 0;
  font-size: 42px;
  line-height: 50px;
  white-space: nowrap;
}

/* system navigation */
.navbar {
  position: relative;
  flex: none;
  display: grid;
  grid-template-columns: 1fr 255px 255px 255px 1fr;
  height: 144px;
  background: #000;
}

.nav-button {
  display: grid;
  place-items: center;
}

.nav-back {
  grid-column: 2;
}

.nav-split {
  justify-self: end;
  width: 120px;
}
```
